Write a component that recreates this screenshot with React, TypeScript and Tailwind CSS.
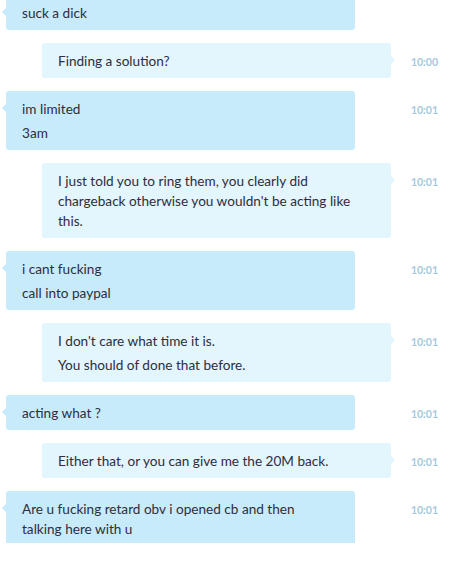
import React from "react";

type Msg = { side: "in" | "out"; lines: string[]; time?: string };

const msgs: Msg[] = [
  { side: "in", lines: ["suck a dick"] },
  { side: "out", lines: ["Finding a solution?"], time: "10:00" },
  { side: "in", lines: ["im limited", "3am"], time: "10:01" },
  {
    side: "out",
    lines: [
      "I just told you to ring them, you clearly did chargeback otherwise you wouldn't be acting like this.",
    ],
    time: "10:01",
  },
  { side: "in", lines: ["i cant fucking", "call into paypal"], time: "10:01" },
  {
    side: "out",
    lines: ["I don't care what time it is.", "You should of done that before."],
    time: "10:01",
  },
  { side: "in", lines: ["acting what ?"], time: "10:01" },
  { side: "out", lines: ["Either that, or you can give me the 20M back."], time: "10:01" },
  {
    side: "in",
    lines: ["Are u fucking retard obv i opened cb and then talking here with u"],
    time: "10:01",
  },
];

function Bubble({ m }: { m: Msg }) {
  const isIn = m.side === "in";
  return (
    <div className="flex items-start">
      <div className="w-[391px] shrink-0">
        <div
          className={
            isIn
              ? "relative ml-[6px] w-[349px] rounded-[3px] bg-[#c7ebfb] pl-[16px] pr-[24px] pt-[8px] pb-[7px]"
              : "relative ml-[42px] w-[349px] rounded-[3px] bg-[#e3f5fd] pl-[16px] pr-[24px] pt-[8px] pb-[7px]"
          }
        >
          <div
            className={
              isIn
                ? "absolute left-[-3px] top-[14px] h-[6px] w-[6px] rotate-45 rounded-[1px] bg-[#c7ebfb]"
                : "absolute right-[-3px] top-[14px] h-[6px] w-[6px] rotate-45 rounded-[1px] bg-[#e3f5fd]"
            }
          />
          <div className="flex flex-col gap-[4px]">
            {m.lines.map((l, i) => (
              <p key={i} className="text-[13.6px] leading-[20px] text-[#2e2e3c]">
                {l}
              </p>
            ))}
          </div>
        </div>
      </div>
      <div className="w-[47px] shrink-0 pt-[12px] text-right text-[10.5px] font-bold leading-[14px] text-[#a6c9de]">
        {m.time ?? ""}
      </div>
    </div>
  );
}

export default function App() {
  return (
    <div
      className="h-[562px] w-[451px] overflow-hidden bg-white"
      style={{ fontFamily: '"Lato", "Noto Sans", sans-serif' }}
    >
      <div className="h-[543px] overflow-hidden">
        <div className="mt-[-5px] flex flex-col gap-[13px]">
          {msgs.map((m, i) => (
            <Bubble key={i} m={m} />
          ))}
        </div>
      </div>
    </div>
  );
}
